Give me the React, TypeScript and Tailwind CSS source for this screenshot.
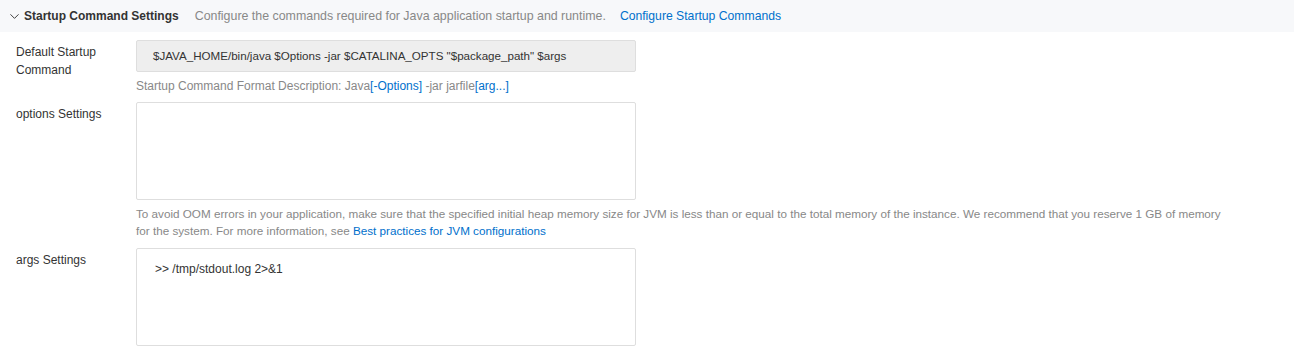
import { ChevronDown } from 'lucide-react';

function Row({ label, children }: { label: string; children: React.ReactNode }) {
  return (
    <div className="flex">
      <div className="w-[136px] shrink-0 pl-4 pr-4 pt-[3px] text-[12px] leading-[18px] text-[#333]">{label}</div>
      <div className="flex-1 min-w-0">{children}</div>
    </div>
  );
}

export default function App() {
  return (
    <div className="w-[1294px] h-[358px] bg-white overflow-hidden" style={{ fontFamily: '"Liberation Sans", Arial, sans-serif' }}>
      <div className="h-8 bg-[#f7f8fa] flex items-center pl-[7px] text-[12px]">
        <ChevronDown size={15} strokeWidth={1.5} className="text-[#333] mr-[2px]" />
        <span className="font-bold text-[#333] text-[12px]">Startup Command Settings</span>
        <span className="ml-4 text-[#888] text-[12.4px]">Configure the commands required for Java application startup and runtime.</span>
        <a className="ml-[14px] text-[#0070cc] text-[12.2px]">Configure Startup Commands</a>
      </div>

      <div className="pt-2 flex flex-col">
        <Row label="Default Startup Command">
          <div className="w-[500px] h-8 bg-[#eeeeee] border border-[#dedede] rounded-[2px] flex items-center pl-4 text-[11.6px] text-[#333]">
            $JAVA_HOME/bin/java $Options -jar $CATALINA_OPTS "$package_path" $args
          </div>
          <p className="mt-[5px] text-[12px] leading-[18px] text-[#888]">
            Startup Command Format Description: Java<span className="text-[#0070cc]">[-Options]</span> -jar jarfile<span className="text-[#0070cc]">[arg...]</span>
          </p>
        </Row>

        <div className="mt-[7px]">
          <Row label="options Settings">
            <textarea className="block w-[500px] h-[98px] border border-[#dedede] rounded-[2px] resize-none outline-none px-4 py-3 text-[12px]" />
            <p className="mt-[5px] w-[1095px] text-[11.7px] leading-[17px] text-[#888]">
              To avoid OOM errors in your application, make sure that the specified initial heap memory size for JVM is less than or equal to the total memory of the instance. We recommend that you reserve 1 GB of memory for the system. For more information, see <span className="text-[#0070cc]">Best practices for JVM configurations</span>
            </p>
          </Row>
        </div>

        <div className="mt-[9px]">
          <Row label="args Settings">
            <div className="w-[500px] h-[98px] border border-[#dedede] rounded-[2px] px-[18px] pt-[11px] text-[12px] leading-[18px] text-[#333]">
              &gt;&gt; /tmp/stdout.log 2&gt;&amp;1
            </div>
          </Row>
        </div>
      </div>
    </div>
  );
}
